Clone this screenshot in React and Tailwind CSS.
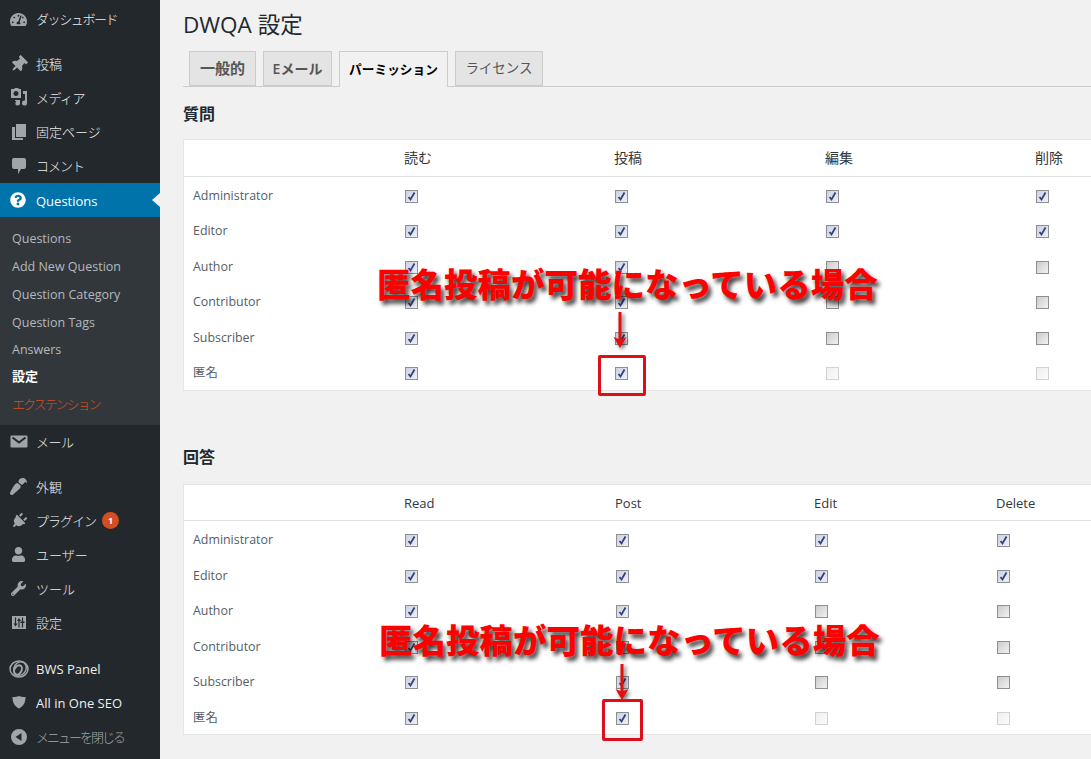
import React from 'react';
import {
  FaTachometerAlt,
  FaThumbtack,
  FaQuestionCircle,
  FaPaintBrush,
  FaPlug,
  FaUser,
  FaWrench,
} from 'react-icons/fa';

const font = "font-['Open_Sans','Noto_Sans_CJK_JP',sans-serif]";

function MediaIcon() {
  return (
    <svg width="20" height="20" viewBox="0 0 20 20" fill="currentColor">
      <path d="M2 1h3l1-1h3l1 1h2v9H2z M7 3a2.500 2.500 0 1 0 .01 0z" fillRule="evenodd" />
      <path d="M14 3h4v12a2.500 2.500 0 1 1-2-2.400V6h-2z" />
      <path d="M6 12h5v3a2.300 2.300 0 1 1-1.600-2H6z" />
    </svg>
  );
}

function PagesIcon() {
  return (
    <svg width="20" height="20" viewBox="0 0 20 20" fill="currentColor">
      <path d="M7 2h10v13H7z" />
      <path d="M3 5h3v11h8v2H3z" />
    </svg>
  );
}

function CommentIcon() {
  return (
    <svg width="20" height="20" viewBox="0 0 20 20" fill="currentColor">
      <path d="M5 2h10a2 2 0 0 1 2 2v7a2 2 0 0 1-2 2h-3l-3 5v-5H5a2 2 0 0 1-2-2V4a2 2 0 0 1 2-2z" />
    </svg>
  );
}

function MailIcon() {
  return (
    <svg width="20" height="20" viewBox="0 0 20 20">
      <rect x="1.500" y="3.500" width="17" height="12" rx="1" fill="currentColor" />
      <path d="M3.500 5.500L10 10.500l6.500-5" fill="none" stroke="#23282d" strokeWidth="2" />
    </svg>
  );
}

function SlidersIcon() {
  return (
    <svg width="20" height="20" viewBox="0 0 20 20">
      <rect x="3" y="3" width="14" height="13" fill="currentColor" />
      <path d="M6.500 4.500v7M10 7v7.500M13.500 4.500v10" stroke="#23282d" strokeWidth="1.200" />
      <path d="M4.500 10.500h4l-2 3z M8 8l2-3 2 3z" fill="#23282d" />
      <path d="M11.500 8.500h4v1.500h-4z" fill="#23282d" />
    </svg>
  );
}

function RingIcon() {
  return (
    <svg width="20" height="20" viewBox="0 0 20 20" fill="none" stroke="currentColor">
      <ellipse cx="10" cy="10" rx="9" ry="8" strokeWidth="1.500" />
      <ellipse cx="11" cy="9.500" rx="6" ry="7" strokeWidth="1.500" transform="rotate(30 11 9.500)" />
      <ellipse cx="9" cy="11" rx="3.500" ry="5" strokeWidth="2" transform="rotate(30 9 11)" />
    </svg>
  );
}

function ShieldIcon() {
  return (
    <svg width="20" height="20" viewBox="0 0 20 20" fill="currentColor">
      <path d="M10 3c2.500 1 4.500 1.200 6.500 1 0 5-1.500 9-6.500 11.500C5 13 3.500 9 3.500 4c2 .2 4-0 6.500-1z" />
    </svg>
  );
}

function CloseIcon() {
  return (
    <svg width="20" height="20" viewBox="0 0 20 20" fill="currentColor">
      <path fillRule="evenodd" d="M10 2a8 8 0 1 1 0 16 8 8 0 0 1 0-16z M12.500 6L6.500 10l6 4z" />
    </svg>
  );
}

function MenuRow({ icon, children, badge, className = 'text-[#eee]' }) {
  return (
    <div className="flex h-[34px] items-center">
      <span className="flex w-9 shrink-0 items-center justify-center pl-px text-[#a0a5aa]">{icon}</span>
      <span className={`whitespace-nowrap pt-[2px] text-[13px] ${className}`}>{children}</span>
      {badge && (
        <span className="ml-[6px] flex h-[17px] w-[17px] items-center justify-center rounded-full bg-[#d54e21] text-[9px] font-bold text-white">
          {badge}
        </span>
      )}
    </div>
  );
}

function Sidebar() {
  const sub = ['Questions', 'Add New Question', 'Question Category', 'Question Tags', 'Answers'];
  return (
    <aside className="h-[759px] w-40 shrink-0 bg-[#23282d] pt-[2px]">
      <MenuRow icon={<FaTachometerAlt size={17} />} className="font-light tracking-[-1.400px] text-[#eee]">ダッシュボード</MenuRow>
      <div className="mt-[11px]">
        <MenuRow icon={<FaThumbtack size={17} className="rotate-45" />} className="font-light text-[#eee]">投稿</MenuRow>
        <MenuRow icon={<MediaIcon />} className="font-light tracking-[-0.500px] text-[#eee]">メディア</MenuRow>
        <MenuRow icon={<PagesIcon />} className="font-light text-[#eee]">固定ページ</MenuRow>
        <MenuRow icon={<CommentIcon />} className="font-light tracking-[-1px] text-[#eee]">コメント</MenuRow>
      </div>

      <div className="relative flex h-[34px] items-center bg-[#0073aa] text-[13px] text-white">
        <span className="flex w-9 items-center justify-center text-white">
          <FaQuestionCircle size={16} />
        </span>
        <span className="pt-[4px]">Questions</span>
        <span className="absolute right-0 top-[10px] border-y-[7px] border-r-[8px] border-y-transparent border-r-[#f1f1f1]" />
      </div>

      <div className="flex flex-col bg-[#32373c] py-[7px] text-[12.500px] text-[#b4b9be]">
        {sub.map((s) => (
          <div key={s} className="flex h-[27.700px] items-center whitespace-nowrap pl-3 pt-1">{s}</div>
        ))}
        <div className="flex h-[27.700px] items-center pl-3 text-[13px] font-bold text-white">設定</div>
        <div className="flex h-[27.700px] items-center pl-3 pt-[2px] text-[13px] font-light tracking-[-2px] text-[#d54e21]">エクステンション</div>
      </div>

      <MenuRow icon={<MailIcon />} className="font-light tracking-[-0.500px] text-[#eee]">メール</MenuRow>
      <div className="mt-[11px]">
        <MenuRow icon={<FaPaintBrush size={17} className="rotate-180" />} className="font-light text-[#eee]">外観</MenuRow>
        <MenuRow icon={<FaPlug size={16} className="rotate-45" />} badge="1" className="font-light tracking-[-1px] text-[#eee]">プラグイン</MenuRow>
        <MenuRow icon={<FaUser size={15} />} className="font-light text-[#eee]">ユーザー</MenuRow>
        <MenuRow icon={<FaWrench size={15} />} className="font-light text-[#eee]">ツール</MenuRow>
        <MenuRow icon={<SlidersIcon />} className="font-light text-[#eee]">設定</MenuRow>
      </div>
      <div className="mt-3">
        <MenuRow icon={<RingIcon />}>BWS Panel</MenuRow>
        <MenuRow icon={<ShieldIcon />} className="text-[13.300px] text-[#eee]">All in One SEO</MenuRow>
        <MenuRow icon={<CloseIcon />} className="font-light tracking-[-2px] text-[#a0a5aa]">メニューを閉じる</MenuRow>
      </div>
    </aside>
  );
}

// state: 1 checked, 0 unchecked, -1 disabled
function Check({ state }) {
  if (state === -1) {
    return <span className="block h-[13px] w-[13px] border border-[#d2d2d2] bg-linear-to-br from-[#efefef] to-[#fbfbfb]" />;
  }
  if (state === 0) {
    return <span className="block h-[13px] w-[13px] border border-[#8f8f8f] bg-linear-to-br from-[#cbcbcb] to-[#f2f2f2]" />;
  }
  return (
    <span className="block h-[13px] w-[13px] border border-[#8f8f8f] bg-linear-to-br from-[#ccd2e2] to-[#eef0f8]">
      <svg viewBox="0 0 11 11" className="h-[11px] w-[11px]" fill="none" stroke="#33417c" strokeWidth="1.800">
        <path d="M2.500 6l2 2.500L8.500 1.500" />
      </svg>
    </span>
  );
}

const ROWS = [
  ['Administrator', 1, 1, 1, 1],
  ['Editor', 1, 1, 1, 1],
  ['Author', 1, 1, 0, 0],
  ['Contributor', 1, 1, 0, 0],
  ['Subscriber', 1, 1, 0, 0],
  ['匿名', 1, 1, -1, -1],
];

function PermTable({ headers, widths, headClass, labelClass, cellClass }) {
  return (
    <div className="w-[925px] border border-[#e5e5e5] bg-white text-[13px] text-[#32373c]">
      <div className={`flex items-center border-b border-[#e1e1e1] ${headClass}`}>
        <div className={`shrink-0 ${widths[0]}`} />
        {headers.map((h, i) => (
          <div key={h} className={`shrink-0 whitespace-nowrap pl-[10px] ${widths[i + 1]}`}>{h}</div>
        ))}
      </div>
      {ROWS.map(([name, ...cells]) => (
        <div key={name} className="flex h-[35.500px] items-center">
          <div className={`shrink-0 pl-[9px] text-[12.400px] text-[#555d66] ${labelClass} ${widths[0]}`}>{name}</div>
          {cells.map((c, i) => (
            <div key={i} className={`shrink-0 pl-[11px] ${cellClass} ${widths[i + 1]}`}>
              <Check state={c} />
            </div>
          ))}
        </div>
      ))}
    </div>
  );
}

function Callout({ text, arrow, box }) {
  return (
    <>
      <div className={`absolute whitespace-nowrap text-[33.500px] leading-none font-black text-[#f00] [text-shadow:3px_4px_4px_rgba(0,0,0,0.75)] ${text}`}>
        匿名投稿が可能になっている場合
      </div>
      <svg className={`absolute drop-shadow-[2px_2px_2px_rgba(0,0,0,0.6)] ${arrow}`} width="16" height="36" viewBox="0 0 16 36" fill="#e01010">
        <path d="M6.500 0h3v27l5-2-6.500 11L1.500 25l5 2z" />
      </svg>
      <div className={`absolute rounded-[2px] border-[3px] border-[#dd0f1b] ${box}`} />
    </>
  );
}

export default function App() {
  return (
    <div className={`flex h-[759px] w-[1091px] overflow-hidden bg-[#f1f1f1] ${font}`}>
      <Sidebar />
      <main className="relative min-w-0 flex-1 pl-[23px]">
        <h1 className="h-[51px] pt-[9px] text-[22.500px] leading-[32px] text-[#23282d]">DWQA 設定</h1>

        <div className="flex h-[36px] gap-[7px] border-b border-[#ccc] pl-[6px] font-semibold text-[#555]">
          <div className="flex h-[35px] w-[67px] items-center justify-center border border-[#ccc] bg-[#e4e4e4] text-[15px]">一般的</div>
          <div className="flex h-[35px] w-[69px] items-center justify-center border border-[#ccc] bg-[#e4e4e4] text-[14px]">Eメール</div>
          <div className="flex h-[36px] w-[109px] items-center justify-center border border-b-0 border-[#ccc] bg-[#f1f1f1] text-[12.700px] text-black">パーミッション</div>
          <div className="flex h-[35px] w-[88px] items-center justify-center border border-[#ccc] bg-[#e4e4e4] text-[13.500px] font-normal">ライセンス</div>
        </div>

        <h2 className="mt-4 h-[36px] text-[16px] leading-[22px] font-semibold text-[#23282d]">質問</h2>
        <PermTable
          headers={['読む', '投稿', '編集', '削除']}
          widths={['w-[210px]', 'w-[210px]', 'w-[211px]', 'w-[210px]', 'w-[80px]']}
          headClass="h-[37px] pb-[2px] text-[14px]"
          labelClass="pt-[3px]"
          cellClass="pt-[3px]"
        />

        <h2 className="mt-[55px] h-[38px] text-[16px] leading-[22px] font-semibold text-[#23282d]">回答</h2>
        <PermTable
          headers={['Read', 'Post', 'Edit', 'Delete']}
          widths={['w-[210px]', 'w-[211px]', 'w-[199px]', 'w-[182px]', 'w-[110px]']}
          headClass="h-[36px] pt-[2px]"
          labelClass="pt-[4px]"
          cellClass="pt-[4px]"
        />

        <Callout text="left-[217px] top-[268px]" arrow="left-[452px] top-[312px]" box="left-[438px] top-[355px] h-[41px] w-[48px]" />
        <Callout text="left-[219px] top-[624px]" arrow="left-[454px] top-[664px]" box="left-[442px] top-[699px] h-[42px] w-[41px]" />
      </main>
    </div>
  );
}
